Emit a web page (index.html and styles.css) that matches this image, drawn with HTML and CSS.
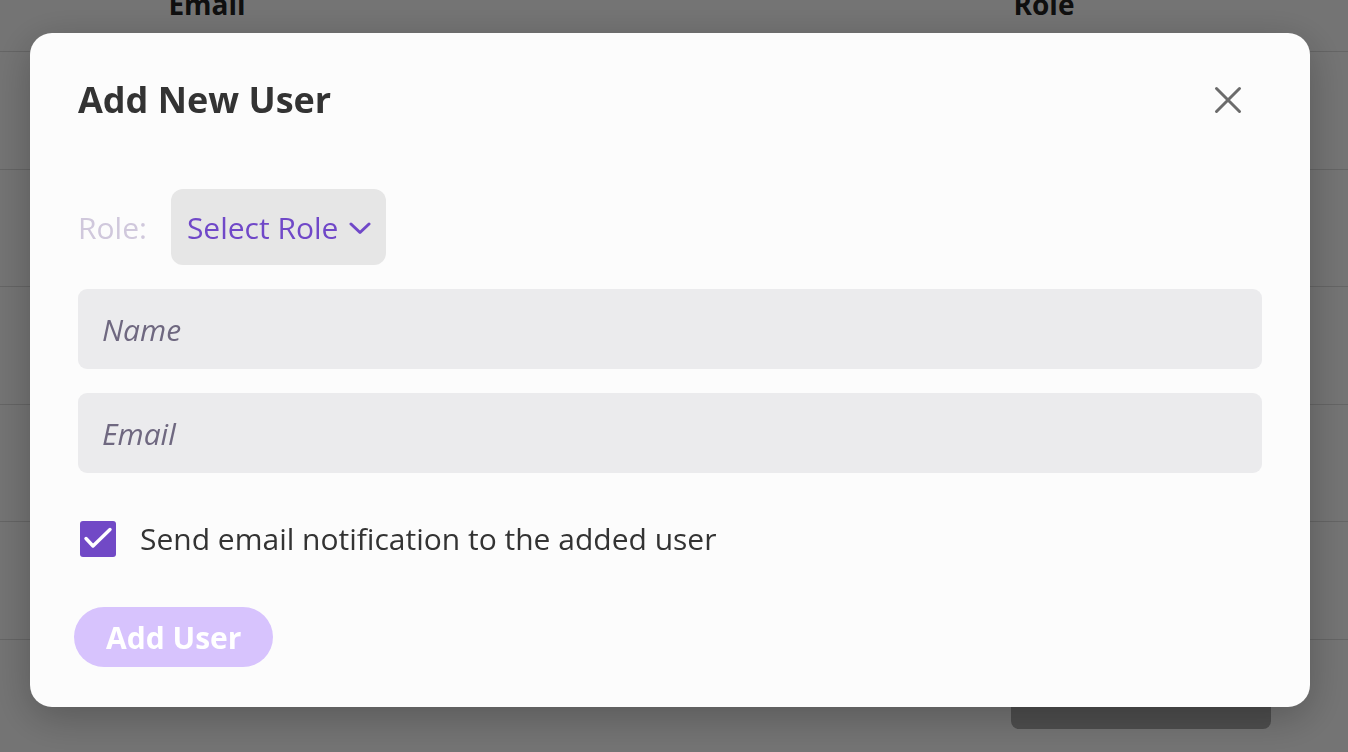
FILE: index.html
```html
<!DOCTYPE html>
<html lang="en">
<head>
    <meta charset="UTF-8">
    <meta name="viewport" content="width=device-width, initial-scale=1.0">
    <title>Users</title>
    <link rel="stylesheet" href="styles.css">
</head>
<body>
    <div class="page">
        <div class="table">
            <div class="table-head">
                <div class="th">Email</div>
                <div class="th"></div>
                <div class="th">Role</div>
            </div>
            <div class="tr"></div>
            <div class="tr"></div>
            <div class="tr"></div>
            <div class="tr"></div>
            <div class="tr"></div>
        </div>
        <div class="page-actions">
            <button class="ghost-btn">Load more</button>
        </div>
    </div>

    <div class="overlay">
        <div class="modal">
            <div class="modal-header">
                <h1>Add New User</h1>
                <button class="close-btn" aria-label="Close">
                    <svg width="28" height="28" viewBox="0 0 28 28">
                        <path d="M2.5 2.5 L25.5 25.5 M25.5 2.5 L2.5 25.5" stroke="#6b6b6b" stroke-width="3" stroke-linecap="round" fill="none"/>
                    </svg>
                </button>
            </div>

            <div class="role-row">
                <span class="role-label">Role:</span>
                <button class="role-select">
                    <span>Select Role</span>
                    <svg width="22" height="13" viewBox="0 0 22 13">
                        <path d="M2 2 L11 10.5 L20 2" stroke="#7048c8" stroke-width="3" stroke-linecap="round" stroke-linejoin="round" fill="none"/>
                    </svg>
                </button>
            </div>

            <input class="field" type="text" placeholder="Name">
            <input class="field" type="email" placeholder="Email">

            <label class="check-row">
                <span class="checkbox">
                    <svg width="36" height="36" viewBox="0 0 36 36">
                        <path d="M6 17.5 L13 25 L30 8.5" stroke="#fff" stroke-width="3.4" stroke-linecap="round" stroke-linejoin="round" fill="none"/>
                    </svg>
                </span>
                <span>Send email notification to the added user</span>
            </label>

            <button class="submit-btn">Add User</button>
        </div>
    </div>
</body>
</html>
```

FILE: styles.css
```css
body {
    font-family: "Open Sans", "Noto Sans", sans-serif;
    margin: 0;
    padding: 0;
    background-color: #ffffff;
    overflow: hidden;
}
.page {
    padding-top: 1px;
    margin-top: -31px;
}
.table-head {
    display: grid;
    grid-template-columns: 414px 426px 408px;
    height: 66px;
    padding-top: 15px;
    border-bottom: 1px solid #dddddd;
}
.th {
    text-align: center;
    font-size: 28px;
    font-weight: 700;
    color: #222222;
}
.tr {
    height: 116.5px;
    border-bottom: 1px solid #dddddd;
}
.page-actions {
    display: flex;
    justify-content: flex-end;
    padding-right: 77px;
    margin-top: 43px;
}
.ghost-btn {
    width: 260px;
    height: 46px;
    border: none;
    border-radius: 8px;
    background-color: #ababab;
    color: #ababab;
}
.overlay {
    position: fixed;
    top: 0;
    left: 0;
    right: 0;
    bottom: 0;
    background-color: rgba(0, 0, 0, 0.545);
    display: flex;
    align-items: flex-start;
    padding: 33px 38px 0 30px;
}
.modal {
    width: 1280px;
    box-sizing: border-box;
    background-color: #fcfcfc;
    border-radius: 22px;
    padding: 45px 48px 40px 48px;
    box-shadow: 0 10px 40px rgba(0, 0, 0, 0.25);
    display: flex;
    flex-direction: column;
}
.modal-header {
    display: flex;
    justify-content: space-between;
    align-items: flex-start;
}
.modal-header h1 {
    margin: 0;
    font-size: 36px;
    line-height: 1.2;
    font-weight: 700;
    color: #333333;
}
.close-btn {
    background: none;
    border: none;
    padding: 0;
    margin: 8px 20px 0 0;
    display: flex;
    cursor: pointer;
}
.role-row {
    display: flex;
    align-items: center;
    gap: 24px;
    margin-top: 68px;
}
.role-label {
    font-size: 30px;
    color: #d0c8dc;
}
.role-select {
    height: 76px;
    display: flex;
    align-items: center;
    gap: 11px;
    padding: 0 15px 0 16px;
    border: none;
    border-radius: 12px;
    background-color: #e6e6e6;
    font-family: inherit;
    font-size: 30px;
    color: #7048c8;
    cursor: pointer;
}
.role-select svg {
    margin-top: 2px;
}
.field {
    margin-top: 24px;
    height: 80px;
    box-sizing: border-box;
    border: none;
    border-radius: 9px;
    background-color: #ebebed;
    padding: 0 24px;
    font-family: inherit;
    font-size: 30px;
    outline: none;
}
.field::placeholder {
    color: #6f6880;
    font-style: italic;
}
.check-row {
    display: flex;
    align-items: center;
    gap: 24px;
    margin-top: 48px;
    margin-left: 2px;
    font-size: 30px;
    line-height: 1.2;
    color: #333333;
}
.checkbox {
    width: 36px;
    height: 36px;
    border-radius: 3px;
    background-color: #7149c6;
    display: flex;
}
.submit-btn {
    align-self: flex-start;
    margin: 50px 0 0 -4px;
    height: 60px;
    padding: 0 32px;
    border: none;
    border-radius: 30px;
    background-color: #d7c3fd;
    color: #ffffff;
    font-family: inherit;
    font-size: 30px;
    font-weight: 700;
}
```
